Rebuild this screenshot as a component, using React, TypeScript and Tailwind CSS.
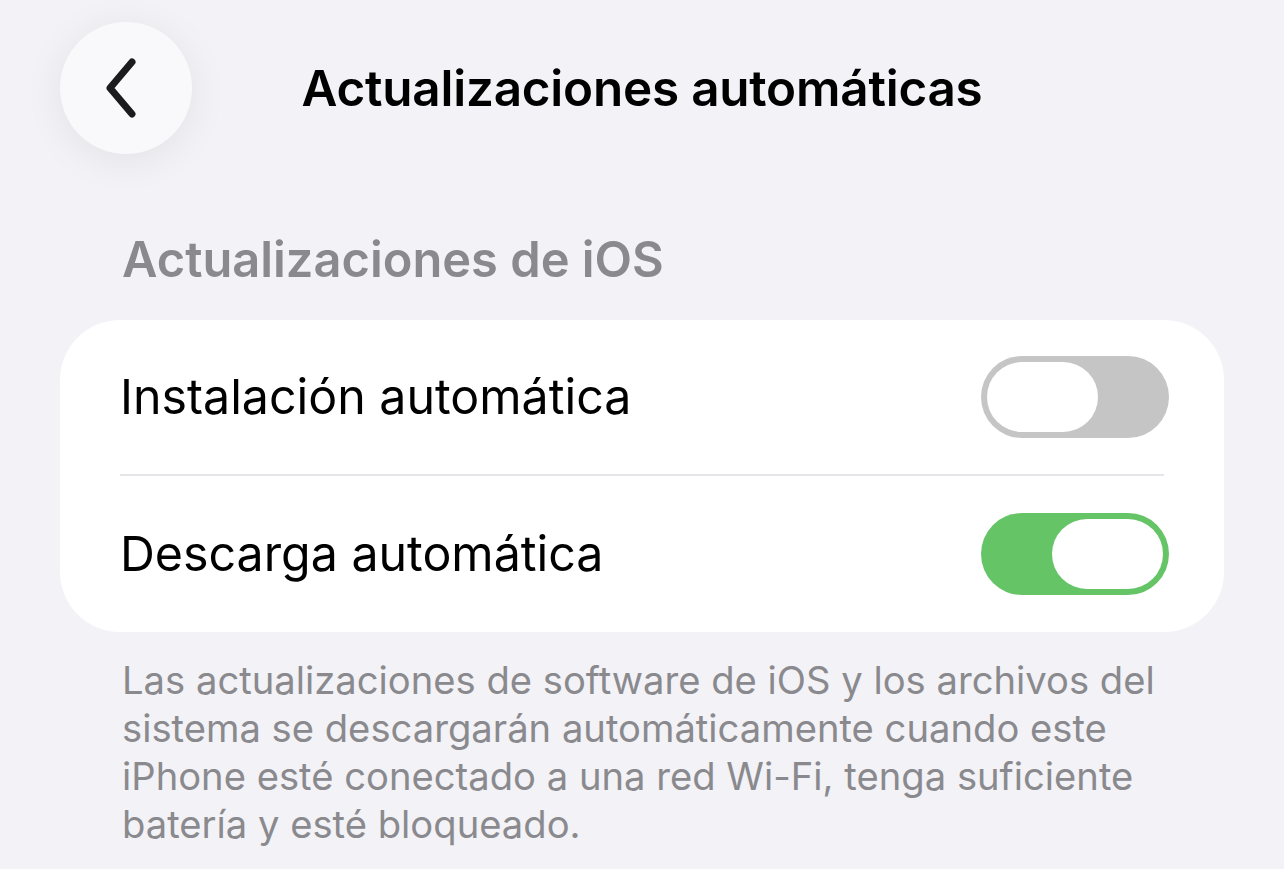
import React from "react";

function Toggle({ on }: { on: boolean }) {
  return (
    <div
      className={`flex h-[82px] w-[188px] rounded-full p-[6px] ${
        on ? "justify-end bg-[#65c466]" : "justify-start bg-[#c5c5c5]"
      }`}
    >
      <div className="h-[70px] w-[111px] rounded-full bg-white" />
    </div>
  );
}

export default function App() {
  return (
    <div
      className="h-[869px] w-full overflow-hidden bg-[#f2f2f7] text-black"
      style={{ fontFamily: "Inter, 'Noto Sans', sans-serif" }}
    >
      <div className="grid grid-cols-[1fr_auto_1fr] items-center px-[60px] pt-[22px]">
        <div>
          <button className="flex h-[132px] w-[132px] items-center justify-center rounded-full bg-[#f9f9fc] shadow-[0_6px_40px_rgba(0,0,0,0.07)]">
            <svg width="40" height="60" viewBox="0 0 40 60" fill="none" className="-ml-[8px]">
              <path
                d="M30 4 L8 30 L30 56"
                stroke="#1c1c1e"
                strokeWidth="7"
                strokeLinecap="round"
                strokeLinejoin="round"
              />
            </svg>
          </button>
        </div>
        <h1 className="text-[49.4px] font-semibold tracking-[-0.2px]">Actualizaciones automáticas</h1>
        <div />
      </div>

      <div className="px-[60px]">
        <h2 className="mt-[78px] pl-[62px] text-[48.8px] font-semibold leading-[56px] text-[#8a8a8e]">
          Actualizaciones de iOS
        </h2>

        <div className="mt-[32px] rounded-[60px] bg-white pl-[60px] pr-[55px]">
          <div className="flex h-[154px] items-center justify-between">
            <span className="text-[48.3px] font-normal">Instalación automática</span>
            <Toggle on={false} />
          </div>
          <div className="mr-[5px] h-[2px] bg-[#e5e5ea]" />
          <div className="flex h-[156px] items-center justify-between">
            <span className="text-[48.3px] font-normal">Descarga automática</span>
            <Toggle on={true} />
          </div>
        </div>

        <p className="mt-[24px] pl-[62px] pr-[40px] text-[38.2px] leading-[48px] text-[#8a8a8e]">
          Las actualizaciones de software de iOS y los archivos del sistema se descargarán
          automáticamente cuando este iPhone esté conectado a una red Wi-Fi, tenga suficiente
          batería y esté bloqueado.
        </p>
      </div>
    </div>
  );
}
